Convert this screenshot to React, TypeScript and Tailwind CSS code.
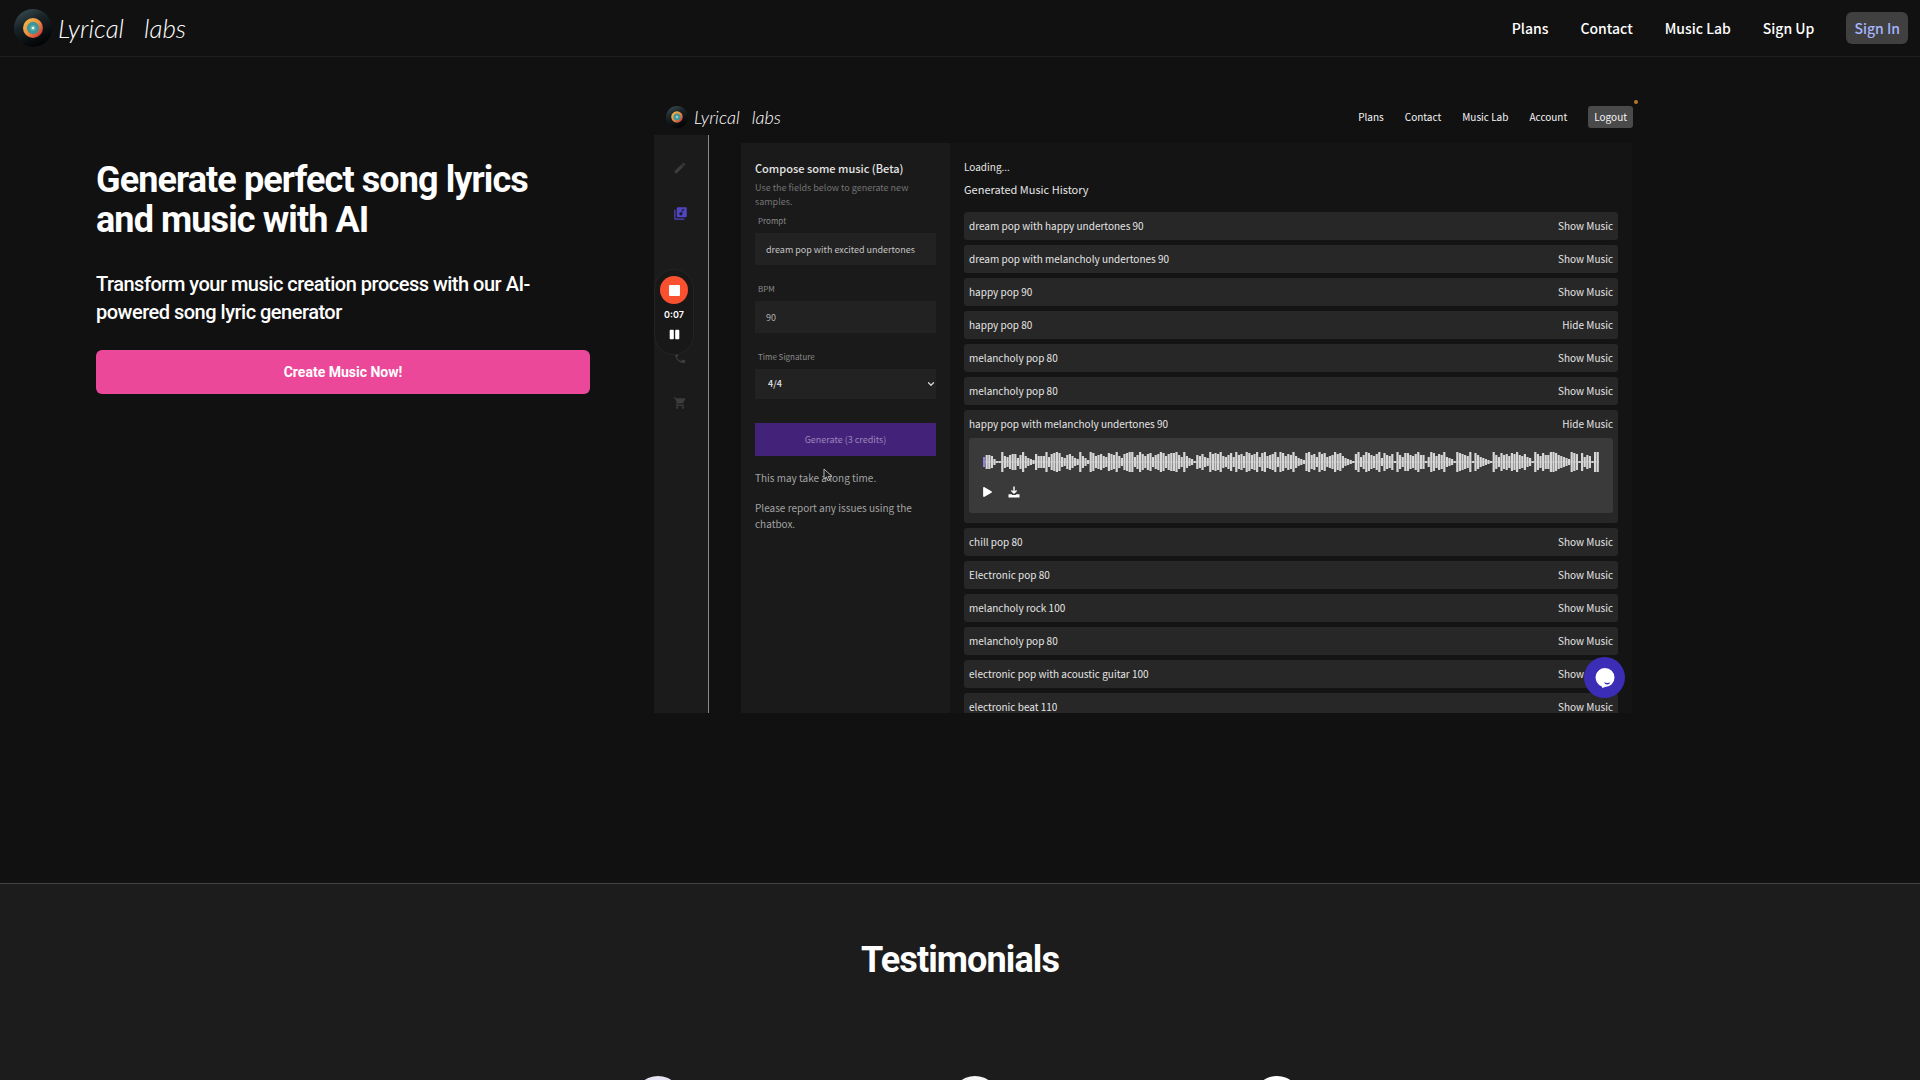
import React from 'react';
import { MdEdit, MdLibraryMusic, MdPhone, MdShoppingCart } from 'react-icons/md';
import { FaPlay, FaPause } from 'react-icons/fa';
import { ChevronDown } from 'lucide-react';

const navLinks = ['Plans', 'Contact', 'Music Lab', 'Sign Up'];
const demoLinks = ['Plans', 'Contact', 'Music Lab', 'Account'];

const tracks = [
  { id: 1, title: 'dream pop with happy undertones 90', action: 'Show Music' },
  { id: 2, title: 'dream pop with melancholy undertones 90', action: 'Show Music' },
  { id: 3, title: 'happy pop 90', action: 'Show Music' },
  { id: 4, title: 'happy pop 80', action: 'Hide Music' },
  { id: 5, title: 'melancholy pop 80', action: 'Show Music' },
  { id: 6, title: 'melancholy pop 80', action: 'Show Music' },
  { id: 7, title: 'happy pop with melancholy undertones 90', action: 'Hide Music', player: true },
  { id: 8, title: 'chill pop 80', action: 'Show Music' },
  { id: 9, title: 'Electronic pop 80', action: 'Show Music' },
  { id: 10, title: 'melancholy rock 100', action: 'Show Music' },
  { id: 11, title: 'melancholy pop 80', action: 'Show Music' },
  { id: 12, title: 'electronic pop with acoustic guitar 100', action: 'Show Music' },
  { id: 13, title: 'electronic beat 110', action: 'Show Music' }
];

// one digit per bar, 0 is silence and 9 is full height
const peaks =
  '4665200954677369532175559478984367532953198567548769537899469757846798578896495320657439787954684967598679489567949857695321896749784569785321' +
  '0794698657938657096488657966049857694320987659086432109648675879657430975866998654329870846509986574320867998657439086407968499659876430794';

function Waveform() {
  return (
    <svg viewBox="0 0 616 22" preserveAspectRatio="none" className="block h-[22px] w-full">
      <rect x="0" y="10.5" width="616" height="1" fill="#a3a3a3" />
      {peaks.slice(0, 237).split('').map((p, i) => {
        const h = 2 + Number(p) * 2;
        return <rect key={i} x={i * 2.6} y={11 - h / 2} width="2.2" height={h} fill={i < 1 ? '#8b83d8' : '#d6d6d6'} />;
      })}
    </svg>
  );
}

function Disc({ id, className }: { id: string; className: string }) {
  return (
    <svg viewBox="0 0 40 40" className={className} aria-hidden="true">
      <defs>
        <linearGradient id={id + '-v'} x1="0.1" y1="0" x2="0.6" y2="1">
          <stop offset="0" stopColor="#3c5157" />
          <stop offset="0.4" stopColor="#1a2428" />
          <stop offset="1" stopColor="#020304" />
        </linearGradient>
        <linearGradient id={id + '-r'} x1="0" y1="0" x2="1" y2="1">
          <stop offset="0" stopColor="#f0c24c" />
          <stop offset="0.5" stopColor="#ee8f3f" />
          <stop offset="0.85" stopColor="#cf3f40" />
        </linearGradient>
      </defs>
      <circle cx="20" cy="20" r="20" fill={'url(#' + id + '-v)'} />
      <circle cx="20" cy="20" r="10.5" fill={'url(#' + id + '-r)'} />
      <circle cx="20" cy="20" r="6.5" fill="#3f9696" />
      <circle cx="20" cy="20" r="3" fill="#5db0b0" />
      <circle cx="20" cy="20" r="1.4" fill="#f4f4f4" />
    </svg>
  );
}

function DownloadIcon() {
  return (
    <svg viewBox="0 0 12 12" className="h-3 w-3" aria-hidden="true">
      <path d="M6 0.5v6M3.4 4.4L6 7l2.6-2.6" fill="none" stroke="#fff" strokeWidth="1.4" />
      <path d="M0.5 8.2h3.2c.6 1.2 4 1.2 4.6 0h3.2v3.3H.5z" fill="#fff" />
    </svg>
  );
}

function Header() {
  return (
    <header className="flex h-[57px] shrink-0 items-center justify-between border-b border-[#1e1e1e] pr-3 pl-[14px]">
      <a href="#" className="flex items-center gap-[6px]">
        <Disc id="disc" className="h-[38px] w-[38px]" />
        <span className="flex gap-5 font-['Lato'] text-[26px] leading-9 font-light italic text-white">
          <span>Lyrical</span>
          <span>labs</span>
        </span>
      </a>
      <nav className="flex items-center gap-8 text-[14px] leading-6 font-medium">
        {navLinks.map((link) => (
          <a key={link} href="#" className="text-white">
            {link}
          </a>
        ))}
        <a href="#" className="rounded-md bg-[#404040] px-2 py-1 text-[#a5b4fc]">
          Sign In
        </a>
      </nav>
    </header>
  );
}

function Sidebar() {
  return (
    <aside className="flex w-[55px] shrink-0 flex-col items-center border-r border-[#8a8a8a] bg-[#1b1b1b] pt-[26px] pr-[2px] text-[#3c3c3c]">
      <MdEdit className="h-[14px] w-[14px]" />
      <MdLibraryMusic className="mt-[31px] h-[15px] w-[15px] text-[#5145c4]" />
      <MdPhone className="mt-[130px] h-[14px] w-[14px]" />
      <MdShoppingCart className="mt-[31px] h-[14px] w-[14px]" />
    </aside>
  );
}

function ComposePanel() {
  return (
    <form className="relative flex w-[209px] shrink-0 flex-col bg-[#1a1a1a] px-[14px] pt-4 text-[10px] text-[#a3a3a3]">
      <h2 className="text-[11px] leading-[18px] font-medium text-[#e5e5e5]">Compose some music (Beta)</h2>
      <p className="mt-1 text-[9px] leading-[14px] text-[#737373]">Use the fields below to generate new samples.</p>
      <label htmlFor="prompt" className="mt-[6px] pl-[3px] text-[8px] leading-3 text-[#8a8a8a]">
        Prompt
      </label>
      <input
        id="prompt"
        type="text"
        defaultValue="dream pop with excited undertones"
        className="mt-[6px] h-8 w-full bg-[#222] px-[11px] text-[9px] text-[#c4c4c4]"
      />
      <label htmlFor="bpm" className="mt-[18px] pl-[3px] text-[8px] leading-3 text-[#8a8a8a]">
        BPM
      </label>
      <input
        id="bpm"
        type="text"
        defaultValue="90"
        className="mt-[6px] h-8 w-full bg-[#222] px-[11px] text-[9px] text-[#b0b0b0]"
      />
      <label htmlFor="signature" className="mt-[18px] pl-[3px] text-[8px] leading-3 text-[#8a8a8a]">
        Time Signature
      </label>
      <div className="relative mt-[6px]">
        <select
          id="signature"
          defaultValue="4/4"
          className="h-[30px] w-full appearance-none bg-[#222] px-[13px] text-[9px] font-medium text-[#e5e5e5]"
        >
          <option>4/4</option>
        </select>
        <ChevronDown className="pointer-events-none absolute top-[10px] right-0 h-[10px] w-[10px] text-[#d4d4d4]" strokeWidth={3} />
      </div>
      <button type="button" className="mt-6 h-[33px] w-full bg-[#43237a] text-[9px] text-[#9d86bb]">
        Generate (3 credits)
      </button>
      <p className="mt-[14px] text-[10px] leading-4">This may take a long time.</p>
      <p className="mt-[14px] text-[10px] leading-4">Please report any issues using the chatbox.</p>
      <svg viewBox="0 0 10 14" className="absolute top-[325px] left-[82px] h-[14px] w-[10px]" aria-hidden="true">
        <path d="M1 1v10l2.4-2 1.6 3.8 1.8-.8-1.6-3.6H9z" fill="#1a1a1a" stroke="#b5b5b5" strokeWidth="1" />
      </svg>
    </form>
  );
}

function History() {
  return (
    <div className="min-w-0 flex-1 bg-[#141414] pt-4 pr-[14px] pl-[14px] text-[#e5e5e5]">
      <p className="text-[10px] leading-4">Loading...</p>
      <h2 className="mt-[5px] text-[11px] leading-[18px]">Generated Music History</h2>
      <ul className="mt-[14px] flex flex-col gap-[5px]">
        {tracks.map((track) => (
          <li key={track.id} className="rounded-[3px] bg-[#272727] px-[5px] text-[10px] leading-7">
            <div className="flex justify-between">
              <span>{track.title}</span>
              <button type="button" className="text-[10px] leading-7">
                {track.action}
              </button>
            </div>
            {track.player && (
              <div className="pb-[10px]">
                <div className="h-[75px] rounded-[3px] bg-[#3a3a3a] px-[14px] pt-[13px]">
                  <Waveform />
                  <div className="mt-[13px] flex items-center gap-4 text-white">
                    <button type="button" aria-label="Play">
                      <FaPlay className="h-[10px] w-[9px]" />
                    </button>
                    <button type="button" aria-label="Download">
                      <DownloadIcon />
                    </button>
                  </div>
                </div>
              </div>
            )}
          </li>
        ))}
      </ul>
    </div>
  );
}

function Recorder() {
  return (
    <div className="absolute top-[171px] left-0 flex h-[86px] w-10 flex-col items-center rounded-full border border-[#242424] bg-[#181818] pt-[6px]">
      <button type="button" aria-label="Stop" className="flex h-7 w-7 items-center justify-center rounded-full bg-[#f9502f]">
        <span className="h-[11px] w-[11px] rounded-[1px] bg-white" />
      </button>
      <span className="mt-[3px] font-['Inter'] text-[9px] leading-4 font-semibold text-white">0:07</span>
      <FaPause className="mt-[6px] h-[11px] w-[11px] text-white" />
    </div>
  );
}

function Demo() {
  return (
    <div className="relative flex aspect-[984/615] w-full max-w-[984px] flex-col overflow-hidden">
      <div className="flex h-[37px] shrink-0 items-center justify-between pr-[5px] pl-3">
        <a href="#" className="flex items-center gap-[6px]">
          <Disc id="demo-disc" className="h-[22px] w-[22px]" />
          <span className="flex gap-3 font-['Lato'] text-[18px] leading-6 font-light italic text-white">
            <span>Lyrical</span>
            <span>labs</span>
          </span>
        </a>
        <nav className="flex items-center gap-[21px] text-[10px] leading-4 text-[#f5f5f5]">
          {demoLinks.map((link) => (
            <a key={link} href="#">
              {link}
            </a>
          ))}
          <a href="#" className="rounded-[3px] bg-[#4a4a4a] px-[6px] py-[3px]">
            Logout
          </a>
        </nav>
      </div>
      <div className="flex min-h-0 flex-1">
        <Sidebar />
        <div className="flex min-w-0 flex-1 pt-2 pr-[6px] pl-8">
          <ComposePanel />
          <History />
        </div>
      </div>
      <span className="absolute top-[2px] right-0 h-1 w-1 rounded-full bg-[#b9762a]" />
      <Recorder />
      <button
        type="button"
        aria-label="Chat"
        className="absolute right-[13px] bottom-[15px] flex h-[41px] w-[41px] items-center justify-center rounded-full bg-[#3b2db5]"
      >
        <svg viewBox="0 0 20 20" className="h-5 w-5" aria-hidden="true">
          <path d="M10 0a9.5 9.5 0 0 1 0 19l-2.6 1-.6-1.600A9.500 9.500 0 0 1 10 0z" fill="#fff" />
          <path d="M9 14.200q3.500 1.600 6.400 0-1.200 2.600-3.400 2.400-2 0-3-2.400z" fill="#3b2db5" />
        </svg>
      </button>
    </div>
  );
}

function Hero() {
  return (
    <section className="grid grid-cols-[494fr_1170fr] gap-16 px-24 pt-[41px] pb-[170px]">
      <div className="pt-[62px] font-['Roboto'] text-white">
        <h1 className="text-[36px] leading-10 font-bold tracking-tight">Generate perfect song lyrics and music with AI</h1>
        <p className="mt-[30px] text-[20px] leading-7 font-medium tracking-tight">
          Transform your music creation process with our AI-powered song lyric generator
        </p>
        <button type="button" className="mt-6 h-11 w-full rounded-md bg-[#ec4899] text-[14px] font-bold">
          Create Music Now!
        </button>
      </div>
      <Demo />
    </section>
  );
}

function Testimonials() {
  return (
    <section className="flex-1 border-t border-[#444] bg-[#1c1c1c] pt-14">
      <h2 className="text-center font-['Roboto'] text-[36px] leading-10 font-bold tracking-tight text-white">Testimonials</h2>
      <div className="mt-24 flex justify-center">
        <div className="flex w-[330px] justify-center">
          <div className="h-12 w-12 rounded-full bg-[#e6e3f2]" />
        </div>
        <div className="flex w-[304px] justify-center">
          <div className="h-12 w-12 rounded-full bg-[#f5f5f5]" />
        </div>
        <div className="flex w-[300px] justify-center">
          <div className="h-12 w-12 rounded-full bg-white" />
        </div>
      </div>
    </section>
  );
}

export default function App() {
  return (
    <div className="flex h-screen flex-col overflow-hidden bg-[#111] font-['Noto_Sans_CJK_SC',sans-serif]">
      <Header />
      <Hero />
      <Testimonials />
    </div>
  );
}
